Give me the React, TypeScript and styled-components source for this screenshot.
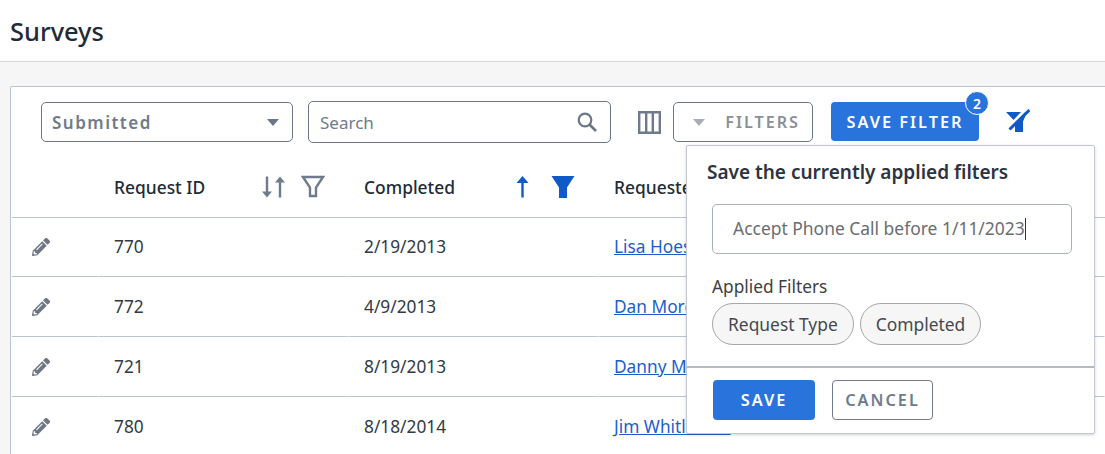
import React from 'react';
import styled, { createGlobalStyle } from 'styled-components';
import { FaPencilAlt } from 'react-icons/fa';

const GlobalStyle = createGlobalStyle`
  html, body {
    margin: 0;
    height: 100%;
    overflow: hidden;
    background: #ffffff;
  }
  * { box-sizing: border-box; }
  body {
    font-family: "Noto Sans", "Open Sans", "Liberation Sans", sans-serif;
    color: #212b36;
  }
`;

const Page = styled.div`
  width: 1105px;
  height: 454px;
  display: flex;
  flex-direction: column;
  overflow: hidden;
`;

const Header = styled.header`
  height: 62px;
  flex: none;
  padding: 15px 10px 0;
  background: #ffffff;
  border-bottom: 1px solid #d5d6d8;
`;

const Title = styled.h1`
  margin: 0;
  font-size: 25.4px;
  line-height: 32px;
  font-weight: 500;
  color: #212b36;
`;

const Content = styled.main`
  flex: 1;
  padding: 24px 0 0 10px;
  background: #f6f6f6;
`;

const Card = styled.section`
  position: relative;
  height: 400px;
  background: #ffffff;
  border: 1px solid #bcc4d2;
  border-right: none;
  border-bottom: none;
  border-radius: 2px 0 0 0;
`;

const Toolbar = styled.div`
  height: 73px;
  padding: 14px 0 0 30px;
  display: flex;
  align-items: flex-start;
`;

const Select = styled.div`
  width: 252px;
  height: 40px;
  margin-top: 1px;
  padding: 0 13px 0 10px;
  display: flex;
  align-items: center;
  justify-content: space-between;
  border: 1px solid #6b7686;
  border-radius: 5px;
  font-size: 17px;
  font-weight: 600;
  letter-spacing: 1.5px;
  color: #6f7b8c;
`;

const Caret = styled.span<{ $light?: boolean }>`
  width: 0;
  height: 0;
  border-left: 6px solid transparent;
  border-right: 6px solid transparent;
  border-top: 7px solid ${props => (props.$light ? '#a9adb4' : '#6b7686')};
`;

const SearchBox = styled.div`
  width: 303px;
  height: 42px;
  margin-left: 15px;
  padding: 0 12px 0 11px;
  display: flex;
  align-items: center;
  justify-content: space-between;
  border: 1px solid #6b7686;
  border-radius: 5px;
  font-size: 17px;
  color: #6f7b8c;
`;

const ColumnsIcon = styled.svg`
  margin: 10px 0 0 27px;
  flex: none;
`;

const FiltersButton = styled.button`
  width: 140px;
  height: 40px;
  margin: 1px 0 0 12px;
  padding: 0 12px 0 19px;
  display: flex;
  align-items: center;
  justify-content: space-between;
  background: #ffffff;
  border: 1px solid #6b7686;
  border-radius: 5px;
  font: inherit;
  font-size: 16.2px;
  font-weight: 600;
  letter-spacing: 2px;
  color: #8b8f96;
`;

const SaveFilterButton = styled.button`
  position: relative;
  width: 148px;
  height: 39px;
  margin: 1px 0 0 18px;
  padding: 0;
  background: #2874dc;
  border: none;
  border-radius: 4px;
  font: inherit;
  font-size: 16.3px;
  font-weight: 600;
  letter-spacing: 2px;
  color: #ffffff;
`;

const Badge = styled.span`
  position: absolute;
  top: -11px;
  right: -10px;
  width: 24px;
  height: 24px;
  display: flex;
  align-items: center;
  justify-content: center;
  border: 1px solid #ffffff;
  border-radius: 50%;
  background: #2874dc;
  font-size: 14px;
  font-weight: 600;
  letter-spacing: 0;
  color: #ffffff;
`;

const ClearFilterIcon = styled.svg`
  margin: 8px 0 0 27px;
  flex: none;
`;

const HeadRow = styled.div`
  height: 58px;
  margin-left: 1px;
  display: grid;
  grid-template-columns: 87px 250px 250px 1fr;
  border-bottom: 1px solid #bcc4d2;
`;

const HeadCell = styled.div`
  padding: 0 0 3px 15px;
  display: flex;
  align-items: center;
  justify-content: space-between;
  font-size: 17.4px;
  font-weight: 500;
  color: #212b36;
`;

const HeadIcons = styled.div`
  width: 64px;
  margin-right: 24px;
  display: flex;
  align-items: center;
  justify-content: space-between;
`;

const Row = styled.div<{ $first?: boolean }>`
  height: ${props => (props.$first ? '59px' : '60px')};
  margin-left: 1px;
  display: grid;
  grid-template-columns: 87px 250px 250px 1fr;
  font-size: 17.3px;
  color: #323a45;
`;

const Cell = styled.div`
  padding: 0 0 1px 15px;
  display: flex;
  align-items: center;
  border-bottom: 1px solid #bcc4d2;
  border-right: 1px solid #ffffff;
`;

const EditCell = styled(Cell)`
  padding: 0 0 0 20px;
  color: #6f7683;
  font-size: 18px;
`;

const PersonLink = styled.a`
  color: #1a5fc8;
  text-decoration: underline;
  white-space: nowrap;
`;

const Popover = styled.div`
  position: absolute;
  left: 675px;
  top: 58px;
  width: 409px;
  height: 289px;
  background: #ffffff;
  border: 1px solid #c3c8d2;
  border-radius: 2px;
  box-shadow: 0 1px 3px rgba(60, 70, 90, 0.25);
  display: flex;
  flex-direction: column;
`;

const PopoverBody = styled.div`
  flex: 1;
  padding: 13px 21px 0 20px;
`;

const PopoverTitle = styled.h2`
  margin: 0;
  font-size: 19px;
  line-height: 26px;
  font-weight: 600;
  color: #2b3440;
`;

const NameInput = styled.div`
  width: 360px;
  height: 50px;
  margin: 19px 0 0 5px;
  padding: 0 0 3px 20px;
  display: flex;
  align-items: center;
  border: 1px solid #aab0bc;
  border-radius: 5px;
  font-size: 17.45px;
  color: #6a6d72;
`;

const TextCursor = styled.span`
  width: 1px;
  height: 22px;
  margin-top: 3px;
  background: #2b3440;
`;

const AppliedLabel = styled.div`
  margin: 21px 0 0 5px;
  font-size: 17.3px;
  line-height: 24px;
  color: #3c4044;
`;

const ChipRow = styled.div`
  margin: 4px 0 0 5px;
  display: flex;
  gap: 6px;
`;

const Chip = styled.span`
  height: 42px;
  padding: 0 15px 1px;
  display: flex;
  align-items: center;
  background: #f6f6f6;
  border: 1px solid #a5a7a9;
  border-radius: 21px;
  font-size: 17.4px;
  color: #45494e;
`;

const PopoverFooter = styled.div`
  height: 67px;
  flex: none;
  padding: 12px 0 0 26px;
  display: flex;
  gap: 17px;
  border-top: 2px solid #b5bac4;
`;

const SaveButton = styled.button`
  width: 102px;
  height: 40px;
  padding: 0;
  background: #2874dc;
  border: none;
  border-radius: 4px;
  font: inherit;
  font-size: 16.3px;
  font-weight: 600;
  letter-spacing: 2px;
  color: #ffffff;
`;

const CancelButton = styled.button`
  width: 101px;
  height: 40px;
  padding: 0;
  background: #ffffff;
  border: 1px solid #6f7b8c;
  border-radius: 4px;
  font: inherit;
  font-size: 16.3px;
  font-weight: 600;
  letter-spacing: 2px;
  color: #6f7b8c;
`;

const rows = [
  { id: '770', completed: '2/19/2013', person: 'Lisa Hoesly' },
  { id: '772', completed: '4/9/2013', person: 'Dan Morgan' },
  { id: '721', completed: '8/19/2013', person: 'Danny Moore' },
  { id: '780', completed: '8/18/2014', person: 'Jim Whitlocker' }
];

const SortIcon = () => (
  <svg width="25" height="24" viewBox="0 0 25 24">
    <path d="M6 1.5v17" stroke="#6f7b8c" strokeWidth="2.4" fill="none" />
    <path d="M1 16.5h10L6 22.5z" fill="#6f7b8c" />
    <path d="M19 22.5v-17" stroke="#6f7b8c" strokeWidth="2.4" fill="none" />
    <path d="M14 7.5h10L19 1.5z" fill="#6f7b8c" />
  </svg>
);

const FunnelOutline = () => (
  <svg width="24" height="24" viewBox="0 0 24 24">
    <path
      d="M2 2h20l-7 10.5V21H9v-8.500z"
      stroke="#6f7b8c"
      strokeWidth="2.4"
      fill="none"
    />
  </svg>
);

const SortUpIcon = () => (
  <svg width="25" height="24" viewBox="0 0 25 24">
    <path d="M11.500 22.500V5" stroke="#0f5ac8" strokeWidth="2.400" fill="none" />
    <path d="M5.500 8h12L11.500 1z" fill="#0f5ac8" />
  </svg>
);

const FunnelSolid = () => (
  <svg width="24" height="24" viewBox="0 0 24 24">
    <path d="M0.500 1h23L16 12.500V23H8V12.500z" fill="#0f5ac8" />
  </svg>
);

const SearchIcon = () => (
  <svg width="22" height="22" viewBox="0 0 22 22">
    <circle cx="9" cy="9" r="6.300" stroke="#6b7686" strokeWidth="2.200" fill="none" />
    <path d="M13.500 13.500l6.500 6.500" stroke="#6b7686" strokeWidth="2.600" fill="none" />
  </svg>
);

export default function App() {
  return (
    <Page>
      <GlobalStyle />
      <Header>
        <Title>Surveys</Title>
      </Header>
      <Content>
        <Card>
          <Toolbar>
            <Select>
              Submitted
              <Caret />
            </Select>
            <SearchBox>
              Search
              <SearchIcon />
            </SearchBox>
            <ColumnsIcon width="23" height="23" viewBox="0 0 23 23">
              <path
                d="M1.200 1.200h20.600v20.600H1.200zM8.200 1.200v20.600M14.800 1.200v20.600"
                stroke="#6f7b8c"
                strokeWidth="2.400"
                fill="none"
              />
            </ColumnsIcon>
            <FiltersButton>
              <Caret $light />
              FILTERS
            </FiltersButton>
            <SaveFilterButton>
              SAVE FILTER
              <Badge>2</Badge>
            </SaveFilterButton>
            <ClearFilterIcon width="24" height="24" viewBox="0 0 24 24">
              <path d="M0 3h21L17 12.500V23H9V12.500z" fill="#0f5ac8" />
              <path d="M-1 22L21 -1" stroke="#ffffff" strokeWidth="3" fill="none" />
              <path d="M3.500 20.500L23.500 1" stroke="#0f5ac8" strokeWidth="3" fill="none" />
            </ClearFilterIcon>
          </Toolbar>

          <HeadRow>
            <HeadCell />
            <HeadCell>
              Request ID
              <HeadIcons>
                <SortIcon />
                <FunnelOutline />
              </HeadIcons>
            </HeadCell>
            <HeadCell>
              Completed
              <HeadIcons>
                <SortUpIcon />
                <FunnelSolid />
              </HeadIcons>
            </HeadCell>
            <HeadCell>Requested By</HeadCell>
          </HeadRow>

          {rows.map((row, index) => (
            <Row key={row.id} $first={index === 0}>
              <EditCell>
                <FaPencilAlt />
              </EditCell>
              <Cell>{row.id}</Cell>
              <Cell>{row.completed}</Cell>
              <Cell>
                <PersonLink href="#">{row.person}</PersonLink>
              </Cell>
            </Row>
          ))}

          <Popover>
            <PopoverBody>
              <PopoverTitle>Save the currently applied filters</PopoverTitle>
              <NameInput>
                Accept Phone Call before 1/11/2023
                <TextCursor />
              </NameInput>
              <AppliedLabel>Applied Filters</AppliedLabel>
              <ChipRow>
                <Chip>Request Type</Chip>
                <Chip>Completed</Chip>
              </ChipRow>
            </PopoverBody>
            <PopoverFooter>
              <SaveButton>SAVE</SaveButton>
              <CancelButton>CANCEL</CancelButton>
            </PopoverFooter>
          </Popover>
        </Card>
      </Content>
    </Page>
  );
}
